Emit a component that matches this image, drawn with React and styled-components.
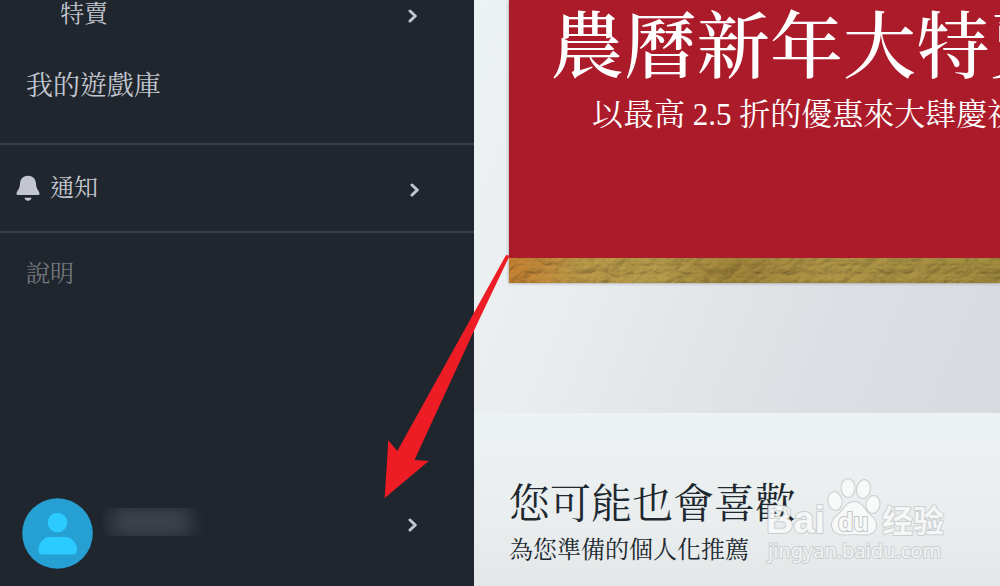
import React from "react";
import styled, { createGlobalStyle } from "styled-components";

const GlobalStyle = createGlobalStyle`
  *, *::before, *::after { box-sizing: border-box; }
  body {
    margin: 0;
    background: #e8ecee;
    font-family: "Liberation Serif", "Noto Serif CJK TC", "Noto Sans CJK TC", serif;
    font-weight: 400;
  }
  h1, h2, p { margin: 0; font-weight: inherit; }
`;

const Page = styled.div`
  position: relative;
  display: flex;
  min-height: 100vh;
  overflow: hidden;
`;

const Sidebar = styled.nav`
  flex: 0 0 474px;
  display: flex;
  flex-direction: column;
  background: #20262d;
  color: #c3c6d0;
`;

const MenuGroup = styled.div`
  display: flex;
  flex-direction: column;
  border-bottom: ${(p) => (p.$divided ? "2px solid #373d44" : "none")};
`;

const MenuButton = styled.button`
  display: flex;
  align-items: center;
  gap: 10px;
  width: 100%;
  height: ${(p) => p.$height}px;
  padding: 0 ${(p) => p.$end || 56}px 0 ${(p) => p.$indent}px;
  border: 0;
  background: none;
  color: ${(p) => (p.$muted ? "#71767c" : "inherit")};
  font: inherit;
  font-size: ${(p) => p.$size || 24}px;
  line-height: 32px;
  text-align: left;
  cursor: pointer;
`;

const Label = styled.span`
  flex: 1;
`;

const ProfileButton = styled(MenuButton)`
  margin-top: auto;
  margin-bottom: 17px;
`;

const Avatar = styled.svg`
  display: block;
  flex: none;
  width: 71px;
  height: 71px;
`;

const HiddenName = styled.span`
  width: 100px;
  height: 28px;
  margin: 0 auto 24px 0;
  overflow: hidden;

  &::before {
    content: "";
    display: block;
    width: 80px;
    height: 28px;
    margin: 0 8px;
    border-radius: 8px;
    background: #3f454d;
    filter: blur(9px);
  }
`;

const ChevronIcon = styled.svg`
  display: block;
  flex: none;
  width: 10px;
  height: 14px;
  margin-bottom: ${(p) => p.$raise || 0}px;
  margin-top: ${(p) => p.$drop || 0}px;
`;

const BellIcon = styled.svg`
  display: block;
  flex: none;
  width: 24px;
  height: 26px;
`;

const Main = styled.main`
  flex: 1;
  min-width: 0;
  display: flex;
  flex-direction: column;
`;

const Hero = styled.section`
  padding: 0 0 130px 35px;
  background: linear-gradient(112deg, #edf2f3 0%, #e9edef 30%, #dcdfe3 70%, #d7dade 100%);
`;

const Banner = styled.div`
  box-shadow: 0 0 3px rgba(60, 50, 50, 0.5);
`;

const BannerBody = styled.div`
  height: 258px;
  padding: 4px 0 0 42px;
  overflow: hidden;
  background: #ac1b2a;
  color: #fff;
  white-space: nowrap;
`;

const BannerTitle = styled.h1`
  font-size: 73px;
  line-height: 88px;
  font-weight: 500;
`;

const BannerText = styled.p`
  padding-left: 41px;
  font-size: 31px;
  line-height: 46px;
`;

const GoldStrip = styled.svg`
  display: block;
  width: 100%;
  height: 25px;
`;

const Suggestions = styled.section`
  flex: 1;
  padding: 65px 0 10px 35px;
  background: linear-gradient(#edf2f3 0%, #e9edee 65%, #e3e7e8 100%);
  color: #20282f;
`;

const SectionTitle = styled.h2`
  font-size: 41px;
  line-height: 52px;
`;

const SectionText = styled.p`
  font-size: 24px;
  line-height: 40px;
`;

const PointerArrow = styled.svg`
  position: absolute;
  left: 380px;
  top: 250px;
  width: 132px;
  height: 250px;
  pointer-events: none;
`;

const Watermark = styled.svg`
  position: absolute;
  right: 50px;
  bottom: 16px;
  width: 190px;
  height: 96px;
  pointer-events: none;
`;

function Chevron({ raise, drop }) {
  return (
    <ChevronIcon $raise={raise} $drop={drop} viewBox="0 0 10 14" aria-hidden="true">
      <path d="M2 2 L7.3 7 L2 12" fill="none" stroke="#c3c6d0" strokeWidth="3" strokeLinecap="round" strokeLinejoin="round" />
    </ChevronIcon>
  );
}

function Bell() {
  return (
    <BellIcon viewBox="0 0 24 26" aria-hidden="true">
      <path
        d="M12 .8C7.4.8 4.5 3.7 4.1 8.1C3.8 11.7 3.2 13.7 1.8 15.4C.9 16.6.5 17.6.5 18.8Q.5 20 1.7 20H22.3Q23.5 20 23.5 18.8C23.5 17.6 23.1 16.6 22.2 15.4C20.8 13.7 20.2 11.7 19.9 8.1C19.5 3.7 16.6.8 12 .8Z"
        fill="#c3c6d0"
      />
      <path d="M8.5 22.8H15.5C15.2 24.7 13.7 25.8 12 25.8S8.8 24.7 8.5 22.8Z" fill="#c3c6d0" />
    </BellIcon>
  );
}

function UserAvatar() {
  return (
    <Avatar viewBox="0 0 71 71" aria-hidden="true">
      <circle cx="35.5" cy="35.5" r="35.3" fill="#269fd2" />
      <circle cx="35.5" cy="24.5" r="9.8" fill="#2bcaff" />
      <path d="M28 39H43C50 39 55 45.5 55 52Q55 56.5 50.5 56.5H20.5Q16.5 56.5 16.5 52C16.5 45.5 21 39 28 39Z" fill="#2bcaff" />
    </Avatar>
  );
}

function GoldFoil() {
  return (
    <GoldStrip aria-hidden="true">
      <defs>
        <linearGradient id="foil">
          <stop offset="0" stopColor="#b8792e" />
          <stop offset="0.08" stopColor="#b5853a" />
          <stop offset="0.14" stopColor="#ae8f43" />
          <stop offset="0.3" stopColor="#a99146" />
          <stop offset="0.46" stopColor="#957b36" />
          <stop offset="0.65" stopColor="#a38b42" />
          <stop offset="1" stopColor="#97823a" />
        </linearGradient>
        <filter id="crease" x="0" y="0" width="100%" height="100%" colorInterpolationFilters="sRGB">
          <feTurbulence type="turbulence" baseFrequency="0.04 0.06" numOctaves="5" seed="12" result="noise" />
          <feDiffuseLighting in="noise" surfaceScale="2" lightingColor="#ffffff" result="light">
            <feDistantLight azimuth="240" elevation="60" />
          </feDiffuseLighting>
          <feComposite in="SourceGraphic" in2="light" operator="arithmetic" k1="0.65" k2="0.45" k3="0" k4="0" />
        </filter>
      </defs>
      <rect width="100%" height="25" fill="url(#foil)" filter="url(#crease)" />
    </GoldStrip>
  );
}

function BaiduMark() {
  const ink = {
    fill: "#fafbfb",
    fillOpacity: 0.85,
    stroke: "#c4c7c9",
    strokeOpacity: 0.8,
    strokeWidth: 2,
    paintOrder: "stroke",
    strokeLinejoin: "round",
  };
  const latin = "Liberation Sans, Arial, sans-serif";
  return (
    <Watermark viewBox="0 0 190 96" role="img" aria-label="Baidu 经验">
      <g {...ink}>
        <text x="6" y="59" fontFamily={latin} fontWeight="700" fontSize="38">Bai</text>
        <ellipse cx="75" cy="27" rx="6.5" ry="9" transform="rotate(-10 75 27)" />
        <ellipse cx="88" cy="14" rx="6.5" ry="9" />
        <ellipse cx="103.500" cy="15" rx="6.500" ry="9" transform="rotate(12 103.500 15)" />
        <ellipse cx="113" cy="30.500" rx="6.500" ry="8.500" transform="rotate(8 113 30.500)" />
        <path d="M94 28C101 28 104 34 108 39C112 43 117 46 116 53C115 59 109 61 103 60.500C98 60 90 60 85 60.500C78 61 73 58 72 52C71 46 77 42 81 38C85 34 87 28 94 28Z" />
        <text x="122" y="58" fontFamily="Noto Sans CJK SC, sans-serif" fontWeight="700" fontSize="31">经验</text>
        <text x="8" y="84" fontFamily="Noto Sans, sans-serif" fontWeight="400" fontSize="20">jingyan.baidu.com</text>
      </g>
      <text x="78" y="57" fontFamily={latin} fontWeight="700" fontSize="25" fill="#f8f9f9" stroke="#c2c5c7" strokeWidth="2" paintOrder="stroke">du</text>
    </Watermark>
  );
}

export default function App() {
  return (
    <>
      <GlobalStyle />
      <Page lang="zh-Hant">
        <Sidebar>
          <MenuGroup $divided>
            <MenuButton $height={28} $indent={60}>
              <Label>特賣</Label>
              <Chevron drop={4} />
            </MenuButton>
            <MenuButton $height={115} $indent={26} $size={27}>
              <Label>我的遊戲庫</Label>
            </MenuButton>
          </MenuGroup>
          <MenuGroup $divided>
            <MenuButton $height={86} $indent={16} $end={54}>
              <Bell />
              <Label>通知</Label>
              <Chevron drop={4} />
            </MenuButton>
          </MenuGroup>
          <MenuGroup>
            <MenuButton $height={82} $indent={26} $muted>
              <Label>說明</Label>
            </MenuButton>
          </MenuGroup>
          <ProfileButton $height={71} $indent={22} aria-label="帳號">
            <UserAvatar />
            <HiddenName />
            <Chevron raise={18} />
          </ProfileButton>
        </Sidebar>
        <Main>
          <Hero>
            <Banner>
              <BannerBody>
                <BannerTitle>農曆新年大特賣</BannerTitle>
                <BannerText>以最高 2.5 折的優惠來大肆慶祝</BannerText>
              </BannerBody>
              <GoldFoil />
            </Banner>
          </Hero>
          <Suggestions>
            <SectionTitle>您可能也會喜歡</SectionTitle>
            <SectionText>為您準備的個人化推薦</SectionText>
          </Suggestions>
        </Main>
        <PointerArrow viewBox="0 0 132 250" aria-hidden="true">
          <path d="M125.500 6Q126.500 4.500 128.500 5.500Q129.500 6 128.500 8L98 72L34.500 210L48.800 211L4.700 248L8.300 190.300L17.300 201Z" fill="#ee1c24" />
        </PointerArrow>
        <BaiduMark />
      </Page>
    </>
  );
}
